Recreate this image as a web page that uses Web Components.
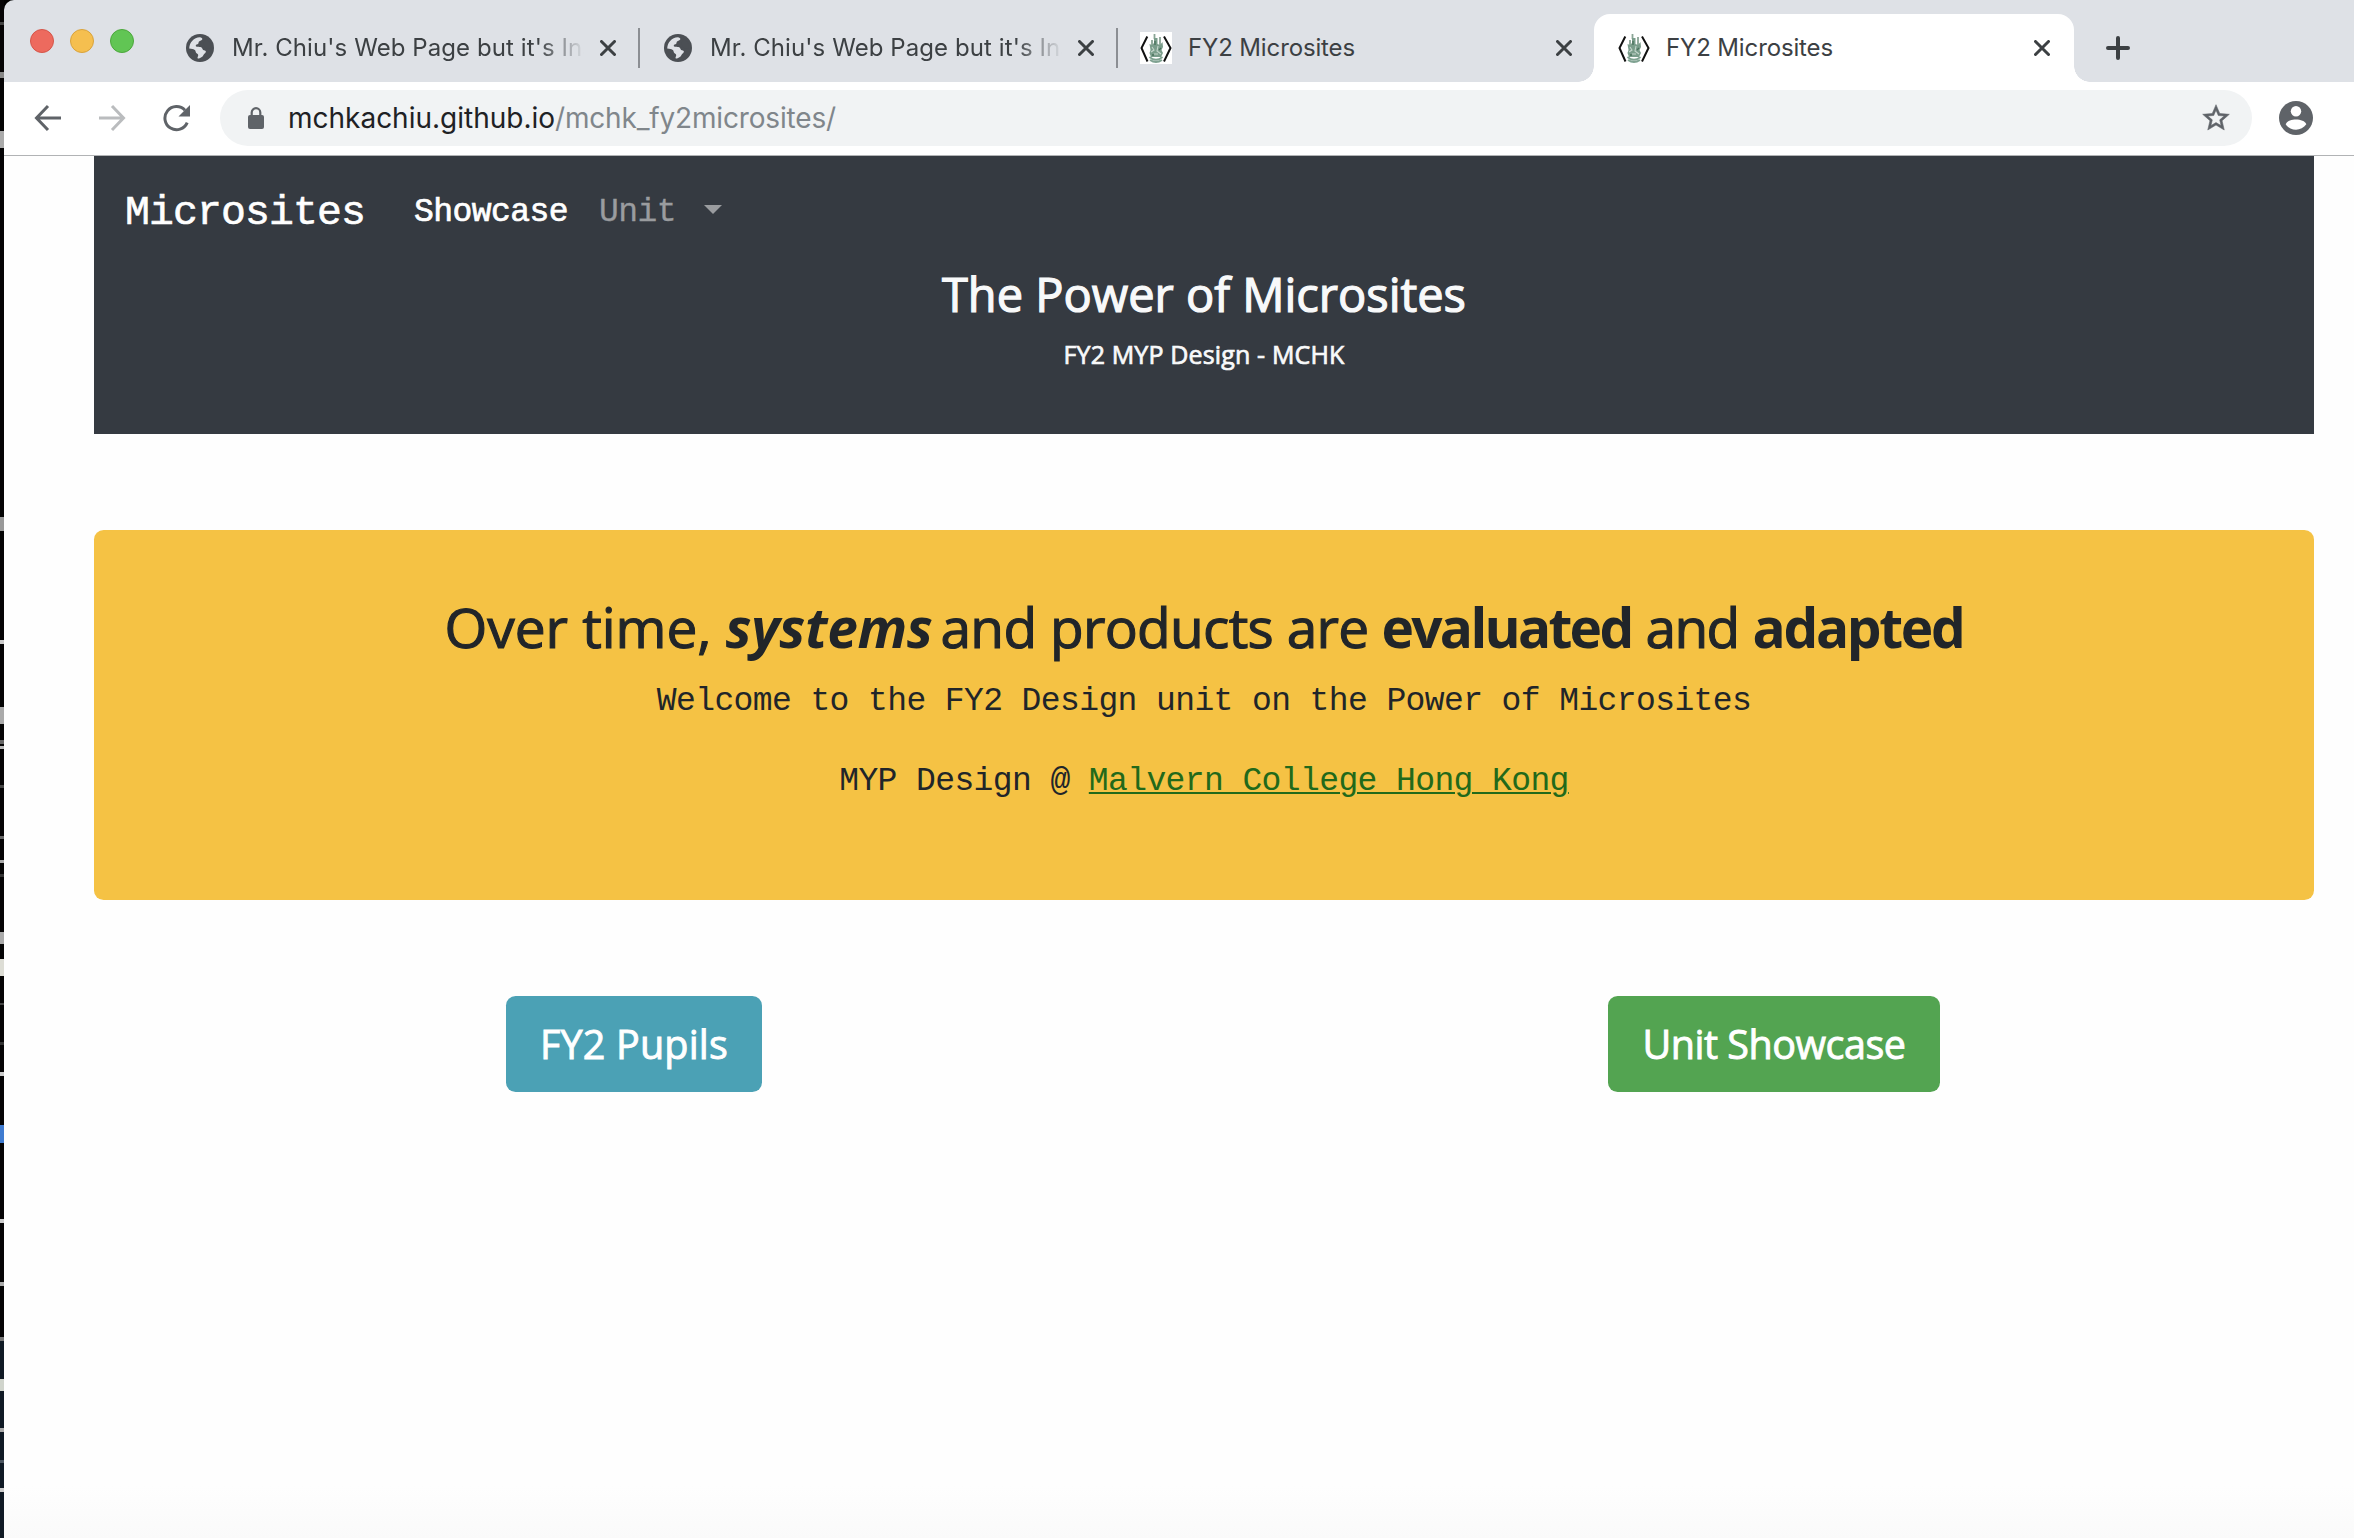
<!DOCTYPE html>
<html lang="en">
<head>
<meta charset="utf-8">
<title>FY2 Microsites</title>
<style>
html,body{margin:0;height:100%;overflow:hidden;background:#000}
</style>
</head>
<body>
<desktop-view></desktop-view>
<script>
const define = (name, html, setup) => customElements.define(name, class extends HTMLElement {
  connectedCallback() {
    if (this.shadowRoot) return;
    const root = this.attachShadow({ mode: 'open' });
    const t = document.createElement('template');
    t.innerHTML = html;
    root.appendChild(t.content.cloneNode(true));
    if (setup) setup.call(this, root);
  }
});

/* Text run tracked so that it fills the width given in its w attribute. */
define('fit-text', `<style>
:host{display:inline-block;white-space:pre;flex:none}
span{display:inline-block}
:host([underline]) span{text-decoration:underline;text-decoration-thickness:2px;text-underline-offset:2px}
</style><span><slot></slot></span>`, function (root) {
  const w = +this.getAttribute('w');
  const span = root.querySelector('span');
  const n = this.textContent.length;
  this.style.width = w + 'px';
  span.style.letterSpacing = ((w - span.getBoundingClientRect().width) / n) + 'px';
});

define('globe-icon', `<style>:host{display:block;width:28px;height:28px}svg{display:block}</style>
<svg width="28" height="28" viewBox="0 0 28 28"><circle cx="14" cy="14" r="14" fill="#4b4f54"/>
<path d="M3.2 14.5C3.6 8 7.8 3.700 13.800 3.200C15.500 3.400 16.500 4 16.300 5.200C16 6.500 14 6.600 13 7.500C12.200 8.400 13 9.800 11.500 10.300C10 10.700 9.500 11.300 9.900 12.300C10.500 13.300 14.500 12.400 15.800 13.800C17 15.200 16.500 16.200 18 16.300C20.300 16.500 20.300 18.300 19 19.200C17.500 20 17.500 22 15.800 23C14.800 23.700 13.500 24.600 11.800 24.600C10.800 23.500 12.400 22.500 12.200 21C12 19.400 9.800 19.500 9.600 17.500C9.500 16 8.500 15.200 3.200 14.500Z" fill="#dee1e6"/>
<path d="M19.600 4.600C23 6.500 25 10 24.900 14.500C24 15.800 22.500 14.300 21 14.200C19.600 14 18.600 13.400 18.800 12C18.900 11 17 10.800 17.200 9.400C17.500 8 19.400 7.300 19.600 4.600Z" fill="#4b4f54"/></svg>`);

define('crest-icon', `<style>:host{display:block;width:32px;height:32px}svg{display:block}</style>
<svg width="32" height="32" viewBox="0 0 32 32"><rect width="32" height="32" fill="#fff"/>
<path d="M7.300 4.500L1.500 16L7.500 29.500M24 4.500L30.500 16L24 29.500" fill="none" stroke="#111" stroke-width="2"/>
<path d="M14.500 2V7M12 8V14M20 5V13" stroke="#8aa596" stroke-width="1.800"/>
<path d="M14 6H17.500V12L20 13L22.500 10L23 15L21.500 18L23 21L21 25H11L9.500 21L10.500 18L9.500 12L12 13L14 11Z" fill="#7a9d8b"/>
<path d="M9.500 25Q16 30.500 22.500 25M10 28Q16 32 22 28" stroke="#7fa291" stroke-width="1.800" fill="none"/>
<path d="M12 15L14 18L11 20M18 14L17 19L21 22M14 22H18" stroke="#c5d6cc" stroke-width="1.100" fill="none"/>
<path d="M15 9V13M21 16L19 18M12 23H14" stroke="#48705b" stroke-width="1.300"/></svg>`);

define('browser-tab', `<style>
:host{display:flex;flex:none;box-sizing:border-box;width:478px;height:68px;align-items:center;padding-left:22px;position:relative;
 font:24px/34px Inter,"Liberation Sans",sans-serif;color:#3c4043}
.ico{width:32px;display:flex;justify-content:center;margin-right:16px}
.t{width:352px;overflow:hidden;white-space:nowrap}
:host([long]) .t{-webkit-mask-image:linear-gradient(90deg,#000 306px,transparent 353px)}
.x{width:16px;height:16px;margin-left:16px}
.sep{width:2px;height:40px;background:#8b8e93;margin-left:22px}
:host([last]) .sep{display:none}
:host([active]){width:480px;margin-left:-2px;padding-left:24px;background:#fff;border-radius:16px 16px 0 0}
:host([active]) .sep{display:none}
.c{display:none;position:absolute;bottom:0;width:16px;height:16px}
:host([active]) .c{display:block}
.l{left:-16px;background:radial-gradient(circle at 0 0,transparent 15.5px,#fff 16px)}
.r{right:-16px;background:radial-gradient(circle at 100% 0,transparent 15.500px,#fff 16px)}
</style><div class="ico"><slot name="icon"></slot></div><div class="t"><slot></slot></div>
<svg class="x" viewBox="0 0 16 16"><path d="M1.500 1.500L14.500 14.500M14.500 1.500L1.500 14.500" stroke="#3c4043" stroke-width="3" stroke-linecap="round"/></svg>
<div class="sep"></div><i class="c l"></i><i class="c r"></i>`);

define('tab-strip', `<style>
:host{display:flex;height:82px;background:#dee1e6;box-sizing:border-box;padding:14px 0 0 26px;border-radius:10px 0 0 0}
.lights{display:flex;gap:16px;margin:15px 28px 0 0;flex:none}
.lights i{width:24px;height:24px;box-sizing:border-box;border-radius:50%;border:1px solid}
.plus{margin:22px 0 0 32px;flex:none}
</style>
<div class="lights"><i style="background:#ed6a5e;border-color:#d55549"></i><i style="background:#f5bf4f;border-color:#d9a33c"></i><i style="background:#61c554;border-color:#4ca73c"></i></div>
<browser-tab long><globe-icon slot="icon"></globe-icon><fit-text w="371">Mr. Chiu's Web Page but it's Inst</fit-text></browser-tab>
<browser-tab long><globe-icon slot="icon"></globe-icon><fit-text w="371">Mr. Chiu's Web Page but it's Inst</fit-text></browser-tab>
<browser-tab last><crest-icon slot="icon"></crest-icon><fit-text w="167">FY2 Microsites</fit-text></browser-tab>
<browser-tab active><crest-icon slot="icon"></crest-icon><fit-text w="167">FY2 Microsites</fit-text></browser-tab>
<svg class="plus" width="24" height="24" viewBox="0 0 24 24"><path d="M12 2V22M2 12H22" stroke="#3c4043" stroke-width="4" stroke-linecap="round"/></svg>`);

define('tool-bar', `<style>
:host{display:flex;align-items:center;height:74px;box-sizing:border-box;border-bottom:1px solid #b1b3b5;background:#fff;padding:0 40px 1px 30px;font:28px/40px Inter,"Liberation Sans",sans-serif;color:#202124}
svg{flex:none;display:block}
.box{flex:1;display:flex;align-items:center;height:56px;border-radius:28px;background:#f1f3f4;padding:0 20px 0 26px;margin:0 26px 0 28px}
.lock{margin-right:22px}
.grow{flex:1}
.path{color:#80868b}
</style>
<svg width="28" height="28" viewBox="0 0 28 28" fill="none" stroke="#5f6368" stroke-width="3"><path d="M27 14H3M14 2L2.500 14L14 26"/></svg>
<svg style="margin-left:36px" width="28" height="28" viewBox="0 0 28 28" fill="none" stroke="#babcbe" stroke-width="3"><path d="M1 14H25M14 2L25.500 14L14 26"/></svg>
<svg style="margin-left:36px" width="30" height="28" viewBox="0 0 30 28"><path d="M25.200 18.700A11.600 11.600 0 1 1 23 6.200" fill="none" stroke="#5f6368" stroke-width="3"/><path d="M28 1V12.500H16.500Z" fill="#5f6368"/></svg>
<div class="box"><svg class="lock" width="20" height="24" viewBox="0 0 20 24"><rect x="2" y="9" width="16" height="14" rx="2" fill="#5f6368"/><path d="M5.700 10V6.500A4.300 4.300 0 0 1 14.300 6.500V10" fill="none" stroke="#5f6368" stroke-width="2.200"/></svg>
<fit-text w="267">mchkachiu.github.io</fit-text><fit-text class="path" w="281">/mchk_fy2microsites/</fit-text><span class="grow"></span>
<svg width="32" height="32" viewBox="0 0 24 24"><path fill="#5f6368" stroke="#5f6368" stroke-width=".4" d="M22 9.240l-7.190-.62L12 2 9.190 8.630 2 9.240l5.460 4.730L5.820 21 12 17.270 18.180 21l-1.630-7.030L22 9.240zM12 15.400l-3.760 2.270 1-4.280-3.320-2.880 4.380-.38L12 6.100l1.710 4.040 4.380.38-3.320 2.880 1 4.280L12 15.400z"/></svg></div>
<svg width="36" height="36" viewBox="0 0 36 36"><circle cx="18" cy="18" r="17" fill="#5f6368"/><circle cx="18" cy="11.300" r="5.200" fill="#fff"/><path d="M7.700 24.300C10 18 26 18 28.300 24.300C23.500 31.500 12.500 31.500 7.700 24.300Z" fill="#fff"/></svg>`);

define('site-header', `<style>
:host{display:block;box-sizing:border-box;height:278px;background:#353a41;color:#fff;padding-top:27px}
nav{display:flex;height:60px;padding-left:31px;font:32px/60px "Liberation Mono",monospace}
.brand{font-size:41.500px;margin-right:49px;-webkit-text-stroke:.6px #fff}
.on{-webkit-text-stroke:.7px #fff;font-size:33px}
.off{color:#9a9c9f;margin-left:31px;font-size:33px;-webkit-text-stroke:.3px #9a9c9f}
.caret{width:0;height:0;border:9px solid transparent;border-top-color:#9a9c9f;border-bottom:0;margin:22px 0 0 28px}
.mid{display:flex;flex-direction:column;align-items:center;font-family:"Open Sans","Noto Sans",sans-serif;font-weight:500;color:#f8f9fa}
.h{font-size:47px;line-height:60px;margin-top:21px;-webkit-text-stroke:1.2px #f8f9fa}
.s{font-size:25px;line-height:30px;margin-top:15px;-webkit-text-stroke:.7px #f8f9fa}
</style>
<nav><fit-text class="brand" w="240">Microsites</fit-text><fit-text class="on" w="154">Showcase</fit-text><fit-text class="off" w="77">Unit</fit-text><i class="caret"></i></nav>
<div class="mid"><fit-text class="h" w="524">The Power of Microsites</fit-text><fit-text class="s" w="281">FY2 MYP Design - MCHK</fit-text></div>`);

define('jumbo-panel', `<style>
:host{display:flex;flex-direction:column;align-items:center;box-sizing:border-box;height:370px;margin-top:96px;border-radius:9.600px;background:#f5c244;color:#212529;padding-top:61px}
h1{margin:0;display:flex;font:500 55px/72px "Open Sans","Noto Sans",sans-serif}
h1 fit-text{-webkit-text-stroke:1.1px #212529}
p{margin:0;display:flex;font:33px/40px "Liberation Mono",monospace}
.w{margin-top:19px}
.m{margin-top:40px}
h1 .b{font-weight:700;-webkit-text-stroke:0}
.i{font-style:italic}
a{color:#22691a}
</style>
<h1><fit-text w="267">Over time,</fit-text><fit-text class="b i" style="margin-left:14px" w="207">systems</fit-text><fit-text style="margin-left:8px" w="428">and products are</fit-text><fit-text class="b" style="margin-left:13px" w="250">evaluated</fit-text><fit-text style="margin-left:14px" w="93">and</fit-text><fit-text class="b" style="margin-left:14px" w="211">adapted</fit-text></h1>
<p class="w"><fit-text w="1094.400">Welcome to the FY2 Design unit on the Power of Microsites</fit-text></p>
<p class="m"><fit-text w="249.600">MYP Design @ </fit-text><a><fit-text underline w="480">Malvern College Hong Kong</fit-text></a></p>`);

define('big-button', `<style>
:host{display:flex;align-items:center;justify-content:center;height:96px;border-radius:9.600px;color:#fff;font:500 39.500px/58px "Open Sans","Noto Sans",sans-serif;-webkit-text-stroke:.9px #fff}
</style><slot></slot>`);

define('web-page', `<style>
:host{display:block;box-sizing:border-box;height:1382px;padding:0 40px 0 90px;background:linear-gradient(#fefefe 1330px,#fafafa 1382px)}
.row{display:flex;margin:96px -60px 0 0}
.row div{flex:1;display:flex;justify-content:center}
.row div:first-child{flex:0 0 1080px}
.p{width:256px;background:#4ba1b5}.u{width:332px;background:#53a451}
</style><site-header></site-header><jumbo-panel></jumbo-panel>
<div class="row"><div><big-button class="p"><fit-text w="188">FY2 Pupils</fit-text></big-button></div><div><big-button class="u"><fit-text w="263">Unit Showcase</fit-text></big-button></div></div>`);

/* Sliver of the desktop behind the window. */
define('desktop-edge', `<style>:host{display:block;width:4px;height:1538px;flex:none}svg{display:block}</style><svg width="4" height="1538"></svg>`, function (root) {
  const marks = [[22,3,'#444'],[72,6,'#888'],[131,17,'#aaa'],[517,14,'#999'],[640,4,'#ccc'],[707,17,'#aaa'],[740,4,'#666'],[746,3,'#bbb'],[785,3,'#444'],[836,3,'#666'],[860,3,'#aaa'],[874,3,'#333'],[932,12,'#aaa'],[959,17,'#ddddd5'],[1003,2,'#444'],[1042,3,'#333'],[1072,4,'#ccc'],[1125,18,'#3f7bd0'],[1219,4,'#ccc'],[1282,4,'#aaa'],[1337,4,'#777'],[1379,12,'#d0d4cc'],[1428,4,'#aaa'],[1460,3,'#4b5560'],[1488,4,'#ccc']];
  root.querySelector('svg').innerHTML = '<rect width="4" height="1340" fill="#050405"/><rect y="1340" width="4" height="198" fill="#101a25"/>' +
    marks.map(m => `<rect y="${m[0]}" width="4" height="${m[1]}" fill="${m[2]}"/>`).join('');
});

define('desktop-view', `<style>:host{display:flex;width:2354px;height:1538px;overflow:hidden}main{flex:1;min-width:0}</style>
<desktop-edge></desktop-edge><main><tab-strip></tab-strip><tool-bar></tool-bar><web-page></web-page></main>`);
</script>
</body>
</html>
